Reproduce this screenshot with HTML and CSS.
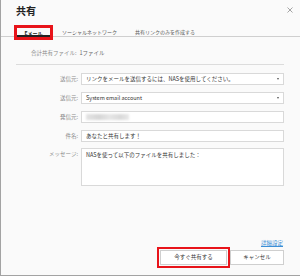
FILE: index.html
```html
<!DOCTYPE html>
<html lang="ja">
<head>
<meta charset="utf-8">
<link rel="stylesheet" href="styles.css">
</head>
<body>
<div class="dialog">
  <div class="header">
    <div class="title">共有</div>
    <div class="close">
      <svg width="6" height="6" viewBox="0 0 6 6"><path d="M0.5 0.5L5.5 5.5M5.5 0.5L0.5 5.5" stroke="#9a9a9a" stroke-width="0.9"/></svg>
    </div>
  </div>
  <div class="tabs">
    <div class="tab active">Eメール</div>
    <div class="tab">ソーシャルネットワーク</div>
    <div class="tab">共有リンクのみを作成する</div>
  </div>
  <div class="summary"><span class="sum-label">合計共有ファイル:</span><span class="sum-value">1ファイル</span></div>
  <div class="sep"></div>
  <div class="form">
    <div class="label">送信元:</div>
    <div class="field select">リンクをメールを送信するには、NASを使用してください。<span class="arrow"></span></div>
    <div class="label">送信元:</div>
    <div class="field select">System email account<span class="arrow"></span></div>
    <div class="label">発信元:</div>
    <div class="field"><span class="blur"></span></div>
    <div class="label">件名:</div>
    <div class="field">あなたと共有します！</div>
    <div class="label">メッセージ:</div>
    <div class="field area">NASを使って以下のファイルを共有しました：</div>
  </div>
  <div class="footer">
    <a class="adv">詳細設定</a>
    <div class="buttons">
      <div class="btn primary">今すぐ共有する</div>
      <div class="btn">キャンセル</div>
    </div>
  </div>
</div>
</body>
</html>
```
FILE: styles.css
```css
html, body {
  margin: 0;
  padding: 0;
}
body {
  width: 300px;
  height: 276px;
  overflow: hidden;
  font-family: "Noto Sans CJK JP", "Noto Sans", sans-serif;
  color: #333;
}
.dialog {
  width: 300px;
  height: 276px;
  box-sizing: border-box;
  background: #fafafa;
  border-left: 1px solid #a3a3a3;
  border-bottom: 1px solid #a3a3a3;
  display: flex;
  flex-direction: column;
}
.header {
  display: flex;
  justify-content: space-between;
  align-items: flex-start;
  padding: 5px 7px 0 15px;
  height: 17px;
}
.title {
  font-size: 10px;
  font-weight: bold;
  line-height: 12px;
  color: #222;
}
.close {
  padding-top: 1px;
  line-height: 0;
}
.tabs {
  display: flex;
  align-items: flex-end;
  border-bottom: 1px solid #cfcfcf;
  height: 15px;
  padding-left: 16px;
  box-sizing: border-box;
}
.tab {
  font-size: 5px;
  line-height: 7px;
  color: #555;
  padding: 0 4px 1px;
  margin-right: 10px;
}
.tab.active {
  width: 33px;
  box-sizing: border-box;
  text-align: center;
  font-weight: bold;
  color: #222;
  border-bottom: 2px solid #222;
  margin-bottom: -1px;
  outline: 3px solid #e8141a;
  margin-right: 8px;
  padding: 1px 0 0;
  height: 9px;
}
.summary {
  padding: 12px 0 0 30px;
  font-size: 5.5px;
  line-height: 8px;
  color: #888;
  height: 27px;
  box-sizing: border-box;
}
.sum-value {
  margin-left: 3px;
  color: #666;
}
.sep {
  margin: 0 16px 0 15px;
  border-top: 1px solid #dcdcdc;
}
.form {
  display: grid;
  grid-template-columns: 62px 1fr;
  column-gap: 3px;
  row-gap: 7px;
  padding: 8px 16px 0 15px;
}
.label {
  font-size: 5.5px;
  line-height: 12px;
  text-align: right;
  color: #8a8a8a;
}
.field {
  position: relative;
  height: 12px;
  box-sizing: border-box;
  background: #fff;
  border: 1px solid #d9d9d9;
  font-size: 5.5px;
  line-height: 10px;
  padding-left: 4px;
  color: #333;
}
.arrow {
  position: absolute;
  right: 4px;
  top: 4px;
  width: 0;
  height: 0;
  border-left: 1.5px solid transparent;
  border-right: 1.5px solid transparent;
  border-top: 2px solid #555;
}
.blur {
  display: inline-block;
  width: 43px;
  height: 6px;
  margin-top: 2px;
  vertical-align: top;
  background: linear-gradient(90deg, #e4e4e4, #d6d6d6 30%, #e6e6e6 55%, #d9d9d9 80%, #e8e8e8);
  filter: blur(0.8px);
}
.field.area {
  height: 38px;
  margin-top: -1px;
  padding-top: 1px;
}
.label:nth-last-child(2) {
  margin-top: -1px;
}
.footer {
  margin-top: auto;
  padding: 0 16px 10px 0;
  display: flex;
  flex-direction: column;
  align-items: flex-end;
}
.adv {
  font-size: 5.5px;
  line-height: 7px;
  color: #3d8fd6;
  text-decoration: underline;
  margin-bottom: 3px;
  margin-right: 1px;
}
.buttons {
  display: flex;
  gap: 3px;
  align-items: center;
}
.btn {
  height: 15px;
  box-sizing: border-box;
  border: 1px solid #cfcfcf;
  background: #fff;
  font-size: 5.5px;
  line-height: 13px;
  text-align: center;
  color: #333;
  width: 54px;
}
.btn.primary {
  width: 67px;
  outline: 2px solid #e8141a;
  outline-offset: 1px;
  margin-right: 0;
}
```
